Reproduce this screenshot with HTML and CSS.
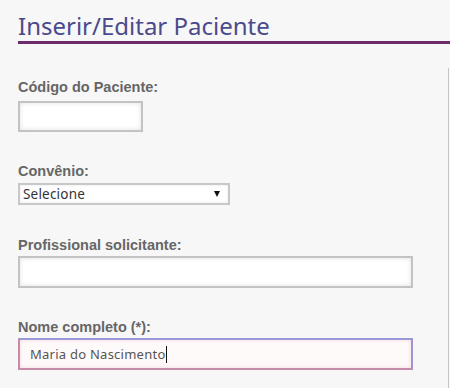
FILE: index.html
```html
<!DOCTYPE html>
<html lang="pt-BR">
<head>
<meta charset="utf-8">
<title>Inserir/Editar Paciente</title>
<link rel="stylesheet" href="styles.css">
</head>
<body>
<div class="page">
  <h1 class="title">Inserir/Editar Paciente</h1>
  <form class="form">
    <div class="field field-first">
      <label class="label" for="codigo">Código do Paciente:</label>
      <input class="input input-short" id="codigo" type="text">
    </div>
    <div class="field field-select">
      <label class="label" for="convenio">Convênio:</label>
      <div class="select-wrap">
        <select class="select" id="convenio">
          <option>Selecione</option>
        </select>
      </div>
    </div>
    <div class="field field-prof">
      <label class="label" for="prof">Profissional solicitante:</label>
      <input class="input input-long" id="prof" type="text">
    </div>
    <div class="field field-nome">
      <label class="label" for="nome">Nome completo (*):</label>
      <div class="input input-long input-focus" id="nome"><span class="value">Maria do Nascimento</span><span class="caret"></span></div>
    </div>
  </form>
</div>
</body>
</html>
```
FILE: styles.css
```css
html, body {
  margin: 0;
  padding: 0;
  background: #f7f7f7;
}
.page {
  width: 450px;
  height: 388px;
  overflow: hidden;
}
.title {
  margin: 0 0 0 18px;
  padding-top: 11px;
  font-family: "Noto Sans", sans-serif;
  font-weight: normal;
  font-size: 24px;
  line-height: 30px;
  height: 30px;
  color: #4b4a8c;
  border-bottom: 3px solid #6b2b6d;
}
.form {
  margin: 24px 0 0 0;
  padding-left: 18px;
  border-right: 1px solid #c6c6c6;
  width: 430px;
  height: 320px;
}
.field {
  display: flex;
  flex-direction: column;
  align-items: flex-start;
}
.field-first { padding-top: 11px; }
.field-select { padding-top: 31px; }
.field-prof { padding-top: 32px; }
.field-nome { padding-top: 31px; }
.label {
  font-family: "Liberation Sans", Arial, sans-serif;
  font-weight: bold;
  font-size: 14.5px;
  line-height: 16px;
  color: #666666;
  margin-bottom: 6px;
}
.field-select .label { margin-bottom: 4px; }
.field-prof .label { margin-bottom: 3px; }
.field-nome .label { margin-bottom: 3px; }
.input {
  box-sizing: border-box;
  height: 31px;
  margin: 0;
  border: 2px solid #c3c3c3;
  background: #ffffff;
  box-shadow: inset 0 0 5px rgba(0, 0, 0, 0.12);
  font-family: "Noto Sans", sans-serif;
  font-size: 13px;
  color: #555555;
  outline: none;
}
.input-short { width: 125px; }
.input-long { width: 395px; height: 32px; }
.input-focus {
  display: flex;
  align-items: center;
  padding-left: 10px;
  border-color: #c48ca8;
  border-top-color: #9a98d8;
  border-right-color: #a294d0;
  border-left-color: #c88aa8;
  background: #fffafa;
  box-shadow: inset 0 0 4px rgba(220, 120, 140, 0.25);
}
.value {
  font-family: "Noto Sans", sans-serif;
  font-size: 13px;
  color: #555555;
  letter-spacing: 0.25px;
}
.caret {
  display: inline-block;
  width: 1px;
  height: 17px;
  background: #111111;
  margin-left: 0;
}
.select-wrap {
  position: relative;
  width: 212px;
  height: 22px;
}
.select {
  box-sizing: border-box;
  width: 212px;
  height: 22px;
  margin: 0;
  padding: 0 0 0 3px;
  border: 2px solid #c8c8c8;
  border-radius: 0;
  background: #ffffff;
  box-shadow: inset 0 0 3px rgba(0, 0, 0, 0.1);
  -webkit-appearance: none;
  appearance: none;
  font-family: "Noto Sans", sans-serif;
  font-size: 13.5px;
  letter-spacing: 0.2px;
  color: #333333;
  outline: none;
}
.select-wrap::after {
  content: "";
  position: absolute;
  right: 10px;
  top: 8px;
  border-left: 3px solid transparent;
  border-right: 3px solid transparent;
  border-top: 6px solid #111111;
}
```
